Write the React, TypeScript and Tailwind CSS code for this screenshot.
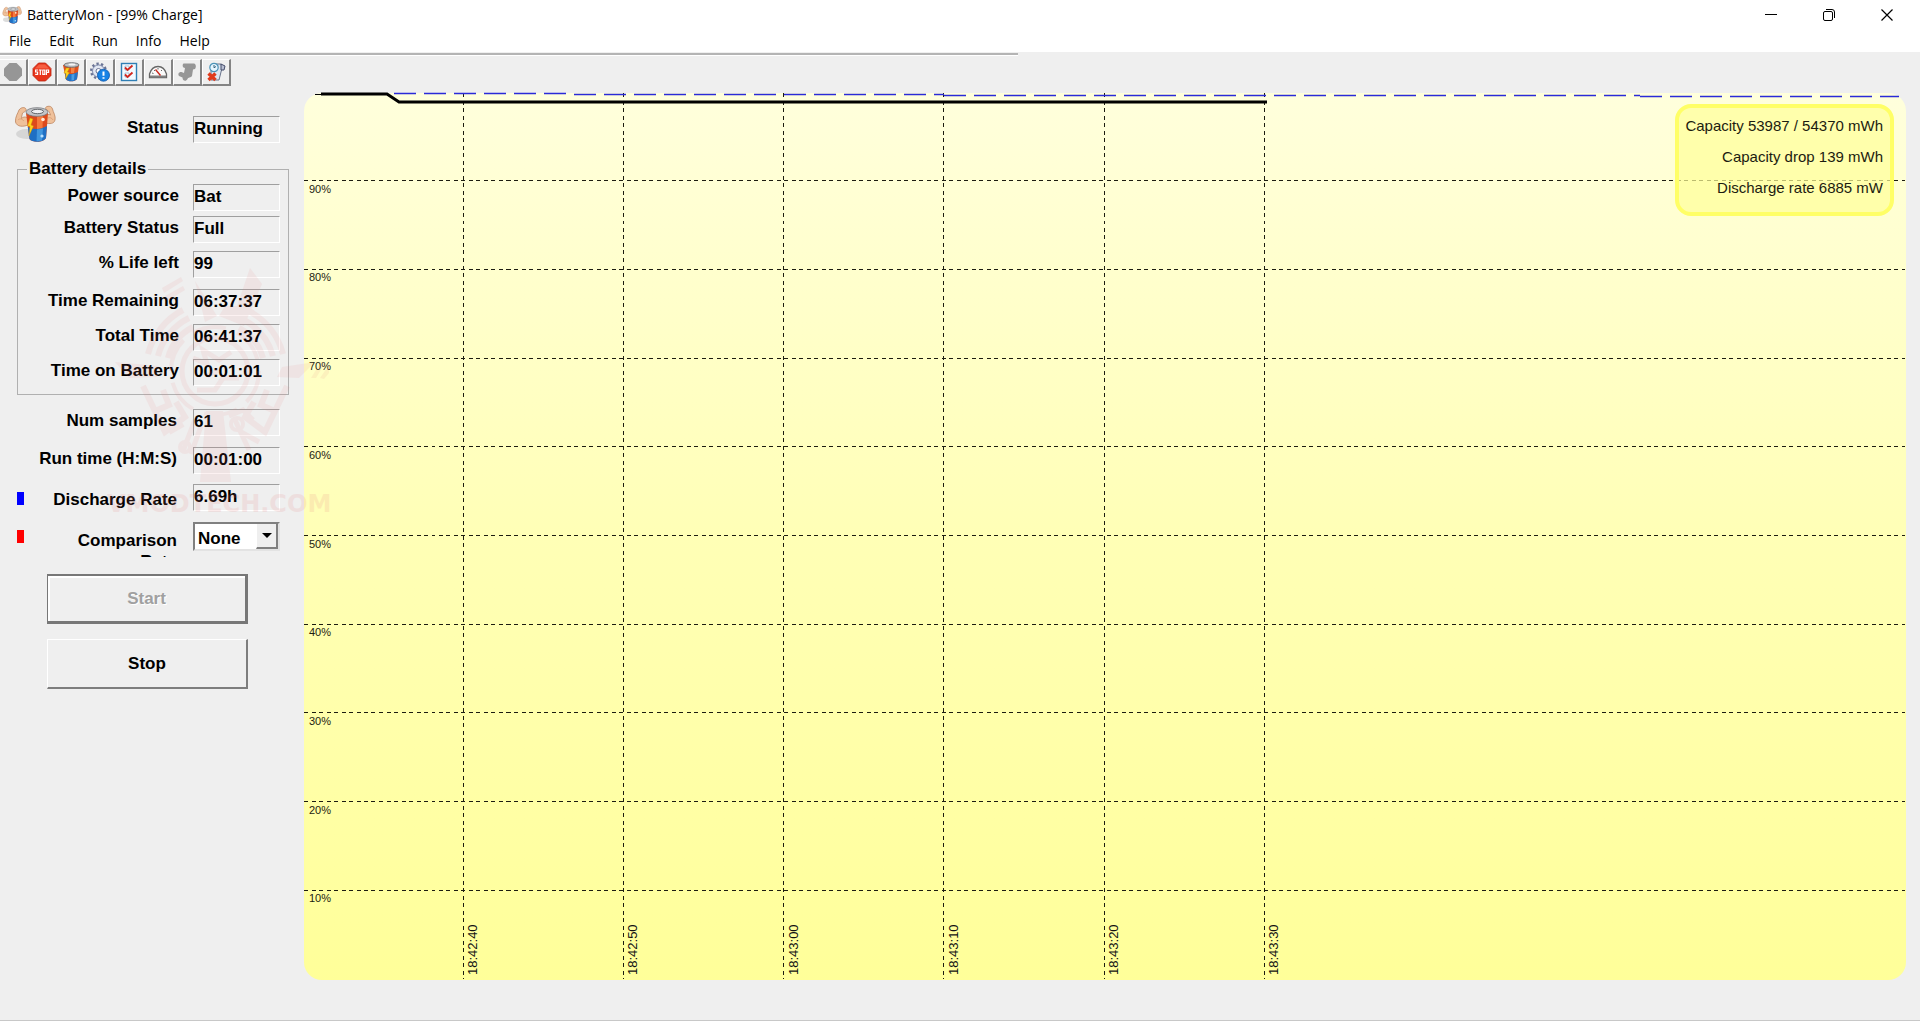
import React from 'react';
import { clsx } from 'clsx';

const MENU = ['File', 'Edit', 'Run', 'Info', 'Help'];

const BATTERY_DETAILS = [
  { id: 'power-source', label: 'Power source', value: 'Bat', space: 'mt-[5px]' },
  { id: 'battery-status', label: 'Battery Status', value: 'Full', space: 'mt-[5px]' },
  { id: 'life-left', label: '% Life left', value: '99', space: 'mt-2' },
  { id: 'time-remaining', label: 'Time Remaining', value: '06:37:37', space: 'mt-[11px]' },
  { id: 'total-time', label: 'Total Time', value: '06:41:37', space: 'mt-2' },
  { id: 'time-on-battery', label: 'Time on Battery', value: '00:01:01', space: 'mt-2' },
];

const TIME_MARKS = [
  { x: '10%', text: '18:42:40' },
  { x: '20%', text: '18:42:50' },
  { x: '30%', text: '18:43:00' },
  { x: '40%', text: '18:43:10' },
  { x: '50%', text: '18:43:20' },
  { x: '60%', text: '18:43:30' },
];

const LEVELS = [90, 80, 70, 60, 50, 40, 30, 20, 10];

function MuscleBattery({ className, arms = true }: { className: string; arms?: boolean }) {
  return (
    <svg viewBox={arms ? '0 0 42 38' : '9 2 26 36'} className={className} aria-hidden="true">
      {arms && (
        <>
          <ellipse cx="13" cy="29" rx="11" ry="5" fill="#c4c4c4" opacity="0.6" />
          <path d="M14 20 C9 22 3 22 1.500 17 C1 12 4 8 5 5 C7 2 11 2 12 4 C13 6 10 7 8.500 8 C8 10 7.500 12 7.500 13.500 C10 11 13 12 14 14 Z" fill="#efc19b" stroke="#bd8560" strokeWidth="0.8" />
          <path d="M31 11 C33 9 35 9 36.500 10 C36 8 35 6.500 34 5.500 C31 5 31 2 33 1.500 C36 0.500 38 2 38.500 4 C39 7 42 11 41 15 C40 19 36 19 31 18 Z" fill="#efc19b" stroke="#bd8560" strokeWidth="0.8" />
          <path d="M4 15 C6 13 8 14 10 16 M34 13 C36 12 38 13 39 15" stroke="#d99c72" strokeWidth="0.8" fill="none" />
        </>
      )}
      <path d="M12 8 L34 8 L32 33 C30 37.500 18 38 15.500 34 Z" fill="#dc4a1c" />
      <path d="M13.800 22 C19 25 27 24.500 33 21 L32 33 C30 37.500 18 38 15.500 34 Z" fill="#1f6fc4" />
      <path d="M23 24.500 L29 23.500 L28 35.500 L22.500 36.500 Z" fill="#4fa6ea" opacity="0.7" />
      <path d="M23 10 L29 9.500 L28.500 23 L23 24 Z" fill="#ff8f4c" opacity="0.7" />
      <ellipse cx="23" cy="7" rx="11" ry="4.300" fill="#c3c5c8" stroke="#77797d" strokeWidth="0.8" />
      <ellipse cx="23.500" cy="6.500" rx="6" ry="2.200" fill="#eef0f2" stroke="#55585b" strokeWidth="0.9" />
      <path d="M16 13 L13.500 21 L16 21.500 L15 31 L19.500 21 L17 20 L19 14 Z" fill="#ffd21f" stroke="#c98a00" strokeWidth="0.4" />
      <circle cx="29" cy="14.500" r="1.800" fill="#ffe9d8" />
      <circle cx="28" cy="31" r="1.600" fill="#b8e0ff" />
    </svg>
  );
}

const OCTAGON = 'M6.500 1 H13.500 L19 6.500 V13.500 L13.500 19 H6.500 L1 13.500 V6.500 Z';

const TOOLS = [
  {
    name: 'Start',
    icon: (
      <svg viewBox="0 0 20 20" className="h-5 w-5">
        <path d={OCTAGON} fill="#969696" />
      </svg>
    ),
  },
  {
    name: 'Stop logging',
    icon: (
      <svg viewBox="0 0 20 20" className="h-5 w-5">
        <path d={OCTAGON} fill="#e8341a" stroke="#b92410" strokeWidth="0.8" />
        <path d="M3 6.500 L7 2.500 H13 L17 6.500 Z" fill="#ff7b5c" opacity="0.6" />
        <g fill="none" stroke="#fff" strokeWidth="1.200">
          <path d="M6 8 H3.600 V10 H5.600 V12.400 H3.200" />
          <path d="M6.800 8 H9.800 M8.300 8 V13" />
          <path d="M10.800 8 H12.800 V12.400 H10.800 Z" />
          <path d="M14.400 13 V8 H16.600 V10.400 H14.400" />
        </g>
      </svg>
    ),
  },
  {
    name: 'Battery',
    icon: (
      <svg viewBox="0 0 20 20" className="h-5 w-5">
        <path d="M2 3 H18 L16 17 C14 20 7 20 5 17.500 Z" fill="#e0501c" />
        <path d="M4 11 C8 13 13 12 17 10 L16 17 C14 20 7 20 5 17.500 Z" fill="#2373c6" />
        <path d="M10 4 H14 L13 11 H10 Z" fill="#ff9a55" opacity="0.7" />
        <path d="M10.500 12.500 L13.500 12 L13 18 L10.500 18.500 Z" fill="#5cb1f0" opacity="0.7" />
        <ellipse cx="10.500" cy="3" rx="7.500" ry="2.300" fill="#bfc1c4" stroke="#5e6165" strokeWidth="0.8" />
        <ellipse cx="11" cy="2.600" rx="3.500" ry="1" fill="#f4f4f4" />
        <path d="M5 6 L3 11 L5 11.500 L4.500 17 L8.500 10.500 L6.500 10 L8.500 6 Z" fill="#ffd21f" stroke="#b98300" strokeWidth="0.4" />
      </svg>
    ),
  },
  {
    name: 'System information',
    icon: (
      <svg viewBox="0 0 20 20" className="h-5 w-5">
        <circle cx="8.500" cy="9" r="7" fill="#d3d9e8" stroke="#6a7394" strokeWidth="3" strokeDasharray="2.200 2.200" />
        <circle cx="8.500" cy="9" r="6" fill="#e2e7f2" stroke="#8791b0" strokeWidth="1" />
        <circle cx="8.500" cy="9" r="2.500" fill="#fff" stroke="#6a7394" />
        <circle cx="13.500" cy="13.200" r="6" fill="#1883e6" stroke="#0b55a8" strokeWidth="0.8" />
        <path d="M13.500 9.500 V13.800 M13.500 15.200 V16.800" stroke="#fff" strokeWidth="2" />
      </svg>
    ),
  },
  {
    name: 'Options',
    icon: (
      <svg viewBox="0 0 20 20" className="h-5 w-5">
        <rect x="2.500" y="1.500" width="15" height="17" fill="#f2f9ff" stroke="#2f7fb5" strokeWidth="1.400" />
        <path d="M6 4 H10 V8 H6 Z M6 11 H10 V15 H6 Z" fill="#fff" stroke="#8fb4cf" strokeWidth="0.8" />
        <path d="M6 5.500 L8.500 8 L13.500 3.500 M6 12.500 L8.500 15 L13.500 10.500" fill="none" stroke="#d3261d" strokeWidth="1.800" />
      </svg>
    ),
  },
  {
    name: 'Gauge',
    icon: (
      <svg viewBox="0 0 20 20" className="h-5 w-5">
        <path d="M1.500 15.500 V12 C3 7 6 4.500 10 4.500 C14 4.500 17 7 18.500 12 V15.500 Z" fill="#fafafa" stroke="#666" strokeWidth="1.300" />
        <path d="M2 14.500 H18" stroke="#808080" strokeWidth="2" />
        <path d="M4 11 L5.500 11.500 M6 8 L7 9 M10 6 V7.500 M14 8 L13 9" stroke="#666" />
        <path d="M7.500 7.500 L12.500 13.500" stroke="#c92a20" strokeWidth="1.400" />
      </svg>
    ),
  },
  {
    name: 'Compare',
    icon: (
      <svg viewBox="0 0 20 20" className="h-5 w-5">
        <path d="M6.500 1.500 H17 C19 2 19.500 5 18 7 L16 7.500 L15 14 C14 16 11 15 10.500 17 C9 20 5.500 19 5.500 15.500 L2 14 C0.500 12 2 9.500 4.500 10 L7 11 L8 6 C5.500 6 5 3 6.500 1.500 Z" fill="#969696" />
      </svg>
    ),
  },
  {
    name: 'Clear log',
    icon: (
      <svg viewBox="0 0 20 20" className="h-5 w-5">
        <path d="M9 2 H15 L16 6 L13 18 H5 V9 Z" fill="#dde5f0" stroke="#68738b" />
        <path d="M15 2 L19 4 L18 8 L15 8 Z" fill="#b8bed2" stroke="#434b69" />
        <circle cx="8" cy="5.500" r="4.200" fill="#e5f5ff" stroke="#4c94b8" strokeWidth="1.200" />
        <path d="M8 3 V5.800 L10 4.500" fill="none" stroke="#35617a" />
        <path d="M2.500 11.500 L9.500 18 M9.500 11.500 L2.500 18" stroke="#e03a1c" strokeWidth="3.400" />
      </svg>
    ),
  },
];

function Reading({ id, label, value, space, outer }: { id: string; label: string; value: string; space?: string; outer?: boolean }) {
  return (
    <div className={clsx('flex items-start justify-end', outer ? 'gap-4' : 'gap-3.5', space)}>
      <label htmlFor={id} className="leading-6 whitespace-nowrap">{label}</label>
      <input
        id={id}
        readOnly
        value={value}
        className="h-[27px] w-[87px] border border-t-[#9f9f9f] border-l-[#9f9f9f] border-r-white border-b-white bg-transparent pb-0.5 outline-none"
      />
    </div>
  );
}

function Watermark() {
  return (
    <div className="pointer-events-none absolute top-[180px] left-[107px] text-[#e88080]" aria-hidden="true">
      <svg viewBox="0 0 222 230" className="h-[230px] w-[222px] opacity-10" fill="currentColor">
        <path d="M143 2 L155 18 L137 60 L112 50 L118 40 L130 40 Z" />
        <path d="M88 15 L110 50 L98 56 Z M55 22 L74 11 L76 15 L57 27 Z M58 30 L76 20 L78 24 L60 35 Z" />
        <path d="M8 96 L52 100 L50 111 L22 112 Z M175 101 L208 96 L192 112 L170 111 Z M204 112 L214 96 L218 97 L209 112 Z M213 112 L222 99 L222 107 L217 113 Z" />
        <path d="M99 145 H116 L124 216 H93 Z" />
        <g fill="none" stroke="currentColor">
          <circle cx="108" cy="105" r="33" strokeWidth="5" />
          <circle cx="108" cy="105" r="44" strokeWidth="4" strokeDasharray="34 12" />
          <path d="M41 88 A69 69 0 0 1 76 44 M51 90 A59 59 0 0 1 82 52 M61 92 A49 49 0 0 1 86 61" strokeWidth="6" />
          <path d="M142 45 A69 69 0 0 1 176 88 M137 54 A59 59 0 0 1 166 90 M132 62 A49 49 0 0 1 156 92" strokeWidth="6" />
          <path d="M36 120 L48 145 L62 139 L56 124 M48 145 L58 166 L78 151 L69 136 M62 166 L76 158" strokeWidth="6" />
          <path d="M180 120 L168 145 L154 139 L160 124 M168 145 L158 166 L138 151 L147 136" strokeWidth="6" />
          <path d="M88 154 L76 185 M94 160 L84 188 M128 154 L142 184 M122 150 L136 144 L146 154 M134 166 L152 176" strokeWidth="5" />
          <path d="M86 92 L100 98 L96 84 L112 94 L124 86 M90 124 H108 L116 112 H132 M100 110 L112 104" strokeWidth="5" />
          <circle cx="130" cy="158" r="6" strokeWidth="4" />
          <circle cx="78" cy="181" r="5" strokeWidth="4" />
        </g>
      </svg>
      <div className="-mt-1 font-['DejaVu_Sans',sans-serif] text-[24px] leading-6 font-bold opacity-15">VMODTECH.COM</div>
    </div>
  );
}

function Sidebar() {
  return (
    <aside className="relative z-10 w-[304px] shrink-0 pt-[17px] font-['Liberation_Sans',Arial,sans-serif] text-[17px] font-bold text-black">
      <div className="flex items-start pr-6 pl-3.5">
        <MuscleBattery className="mt-0.5 h-[38px] w-[42px]" />
        <div className="flex-1 pt-[13px]">
          <Reading id="status" label="Status" value="Running" />
        </div>
      </div>

      <fieldset className="mt-4 mr-[15px] ml-[17px] border border-[#b0b0b0] pr-2 pb-2">
        <legend className="ml-[9px] px-0.5 leading-5">Battery details</legend>
        {BATTERY_DETAILS.map((row) => (
          <Reading key={row.id} {...row} />
        ))}
      </fieldset>

      <div className="pr-6">
        <Reading id="num-samples" label="Num samples" value="61" space="mt-3.5" outer />
        <Reading id="run-time" label="Run time (H:M:S)" value="00:01:00" space="mt-[11px]" outer />
        <div className="mt-2 flex pt-0.5 pl-[17px]">
          <span className="mt-2 h-[13px] w-[7px] bg-[#0000ff]" />
          <div className="flex flex-1 items-start justify-end gap-4">
            <label htmlFor="discharge-rate" className="pt-1 leading-6">Discharge Rate</label>
            <input
              id="discharge-rate"
              readOnly
              value="6.69h"
              className="h-[27px] w-[87px] border border-t-[#9f9f9f] border-l-[#9f9f9f] border-r-white border-b-white bg-transparent pb-0.5 outline-none"
            />
          </div>
        </div>
        <div className="mt-2.5 flex pl-[17px]">
          <span className="mt-2 h-[13px] w-[7px] bg-[#ff0000]" />
          <div className="flex flex-1 items-start justify-end gap-4">
            <label htmlFor="comparison-rate" className="mt-2 h-[27px] w-[110px] overflow-hidden text-right leading-[21px]">
              Comparison Rate
            </label>
            <div className="relative">
              <select
                id="comparison-rate"
                className="h-[29px] w-[87px] appearance-none border-2 border-t-[#808080] border-r-[#e3e3e3] border-b-[#e3e3e3] border-l-[#808080] bg-white pt-0.5 pl-[3px] outline-none"
              >
                <option>None</option>
              </select>
              <span className="pointer-events-none absolute top-0.5 right-0.5 flex h-[25px] w-[22px] items-center justify-center border-r-2 border-b-2 border-l border-r-[#808080] border-b-[#808080] border-l-white bg-[#efefef]">
                <svg viewBox="0 0 10 5" className="h-[5px] w-[10px]">
                  <path d="M0 0 H10 L5 5 Z" fill="#000" />
                </svg>
              </span>
            </div>
          </div>
        </div>
      </div>

      <div className="mt-[17px] ml-[47px] flex w-[201px] flex-col gap-[15px]">
        <button
          type="button"
          disabled
          className="h-[50px] border-t-2 border-r-[3px] border-b-[3px] border-l border-[#777] text-[#a0a0a0] shadow-[inset_1px_1px_0_1px_#fff] [text-shadow:1px_1px_0_#fff]"
        >
          Start
        </button>
        <button type="button" className="h-[50px] border-t border-r-2 border-b-2 border-l border-t-white border-r-[#7d7d7d] border-b-[#7d7d7d] border-l-white">
          Stop
        </button>
      </div>

      <Watermark />
    </aside>
  );
}

function ChargeChart() {
  return (
    <section className="relative min-h-[600px] flex-1 font-['Liberation_Sans',Arial,sans-serif]" aria-label="Charge history">
      <div className="absolute inset-0 rounded-[18px] bg-linear-to-b from-[#ffffdc] via-[#ffffb6] to-[#ffff99]" />
      <svg className="absolute inset-0 h-full w-full overflow-visible">
        <g transform="translate(-1 -1)">
          <g stroke="#1c1c10" strokeWidth="1" strokeDasharray="4 3.500" shapeRendering="crispEdges">
            {LEVELS.map((level) => (
              <line key={level} x1="1" x2="100%" y1={`${100 - level}%`} y2={`${100 - level}%`} />
            ))}
            {TIME_MARKS.map((mark) => (
              <line key={mark.text} x1={mark.x} x2={mark.x} y1="1" y2="100%" />
            ))}
          </g>
          {LEVELS.map((level) => (
            <svg key={level} x="0" y={`${100 - level}%`} className="overflow-visible">
              <text x="6" y="12" fontSize="11" fill="#1c1c10">{level}%</text>
            </svg>
          ))}
          {TIME_MARKS.map((mark) => (
            <svg key={mark.text} x={mark.x} y="100%" className="overflow-visible">
              <text transform="translate(14 -4) rotate(-90)" fontSize="13" fill="#111">{mark.text}</text>
            </svg>
          ))}
        </g>
        <svg viewBox="0 0 1602 888" width="100%" height="100%" preserveAspectRatio="none" className="overflow-visible">
          <path d="M90 0.500 H270 M270 1.500 H640 M640 2.500 H1336 M1336 3.500 H1595" fill="none" stroke="#2a2ad8" strokeWidth="1.300" strokeDasharray="22 8" vectorEffect="non-scaling-stroke" />
          <path d="M11 1.500 H18" fill="none" stroke="#000" strokeWidth="1" vectorEffect="non-scaling-stroke" />
          <path d="M17 1 H83 L95 9 H963" fill="none" stroke="#000" strokeWidth="3" vectorEffect="non-scaling-stroke" />
        </svg>
      </svg>
      <div className="absolute top-[11px] right-3 w-[219px] rounded-2xl border-4 border-[#ffff66] bg-[#ffff99]/70 pt-0.5 pr-[7px] pb-[9px] text-right text-[15px] leading-[31px] whitespace-nowrap text-[#1c1c10]">
        <p>Capacity 53987 / 54370 mWh</p>
        <p>Capacity drop 139 mWh</p>
        <p>Discharge rate 6885 mW</p>
      </div>
    </section>
  );
}

export default function App() {
  return (
    <div className="flex min-h-screen flex-col border-b border-[#c8c8c8] bg-[#efefef] font-['Open_Sans','Noto_Sans',sans-serif] text-black">
      <header className="bg-white">
        <div className="flex h-[29px] items-center justify-between">
          <div className="flex items-center gap-[5px] pl-0.5">
            <MuscleBattery className="h-[18px] w-5" />
            <h1 className="text-[14px] leading-5">BatteryMon - [99% Charge]</h1>
          </div>
          <div className="flex pr-1">
            <button type="button" aria-label="Minimize" className="flex h-7 w-[58px] items-center justify-center">
              <svg viewBox="0 0 12 12" className="h-3 w-3"><path d="M0 5.500 H12" stroke="#000" /></svg>
            </button>
            <button type="button" aria-label="Restore" className="flex h-7 w-[58px] items-center justify-center">
              <svg viewBox="0 0 12 12" className="h-3 w-3" fill="none" stroke="#000">
                <rect x="0.500" y="2.500" width="9" height="9" rx="1.500" />
                <path d="M3 0.500 H9 Q11.500 0.500 11.500 3 V9" />
              </svg>
            </button>
            <button type="button" aria-label="Close" className="flex h-7 w-[58px] items-center justify-center">
              <svg viewBox="0 0 12 12" className="h-3 w-3"><path d="M0.500 0.500 L11.500 11.500 M11.500 0.500 L0.500 11.500" stroke="#000" strokeWidth="1.200" /></svg>
            </button>
          </div>
        </div>
        <nav className="flex h-[23px] items-center gap-[18px] pl-[9px] text-[14px] leading-5">
          {MENU.map((item) => (
            <button key={item} type="button">{item}</button>
          ))}
        </nav>
      </header>

      <div className="w-[53%] border-b border-white pt-px">
        <div className="h-0.5 bg-[#b4b4b4]" />
      </div>

      {/* Toolbar */}
      <div className="-ml-px flex pt-[3px]" role="toolbar">
        {TOOLS.map((tool) => (
          <button
            key={tool.name}
            type="button"
            aria-label={tool.name}
            className="flex h-[27px] w-[29px] items-center justify-center border-t border-r-2 border-b-2 border-l border-t-white border-r-[#848484] border-b-[#848484] border-l-white"
          >
            {tool.icon}
          </button>
        ))}
      </div>

      <main className="flex flex-1">
        <Sidebar />
        <div className="flex flex-1 pt-[7px] pr-3.5 pb-10">
          <ChargeChart />
        </div>
      </main>
    </div>
  );
}
